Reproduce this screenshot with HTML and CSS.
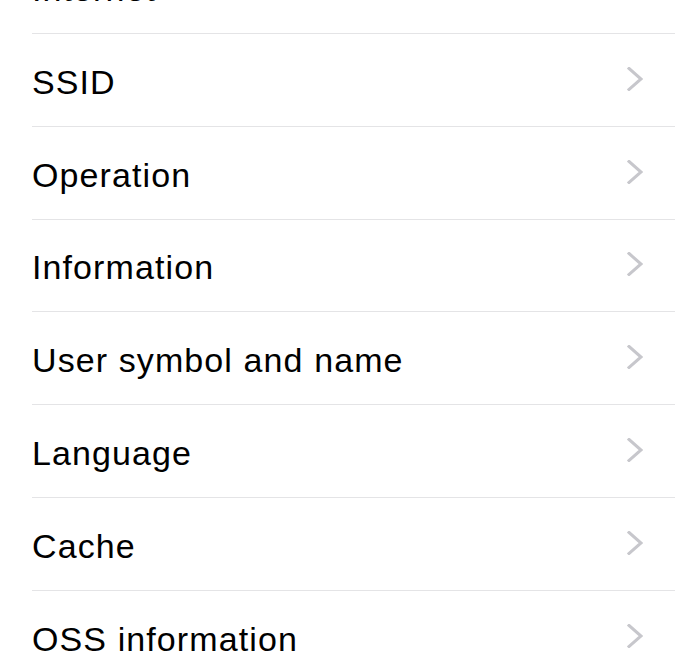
FILE: index.html
```html
<!DOCTYPE html>
<html>
<head>
<meta charset="utf-8">
<link rel="stylesheet" href="styles.css">
</head>
<body>
<ul class="list">
  <li class="row"><span class="label">Internet</span><svg class="chev" viewBox="0 0 16 24"><polyline points="2,1.5 14,12 2,22.5"/></svg></li>
  <li class="row"><span class="label">SSID</span><svg class="chev" viewBox="0 0 16 24"><polyline points="2,1.5 14,12 2,22.5"/></svg></li>
  <li class="row"><span class="label">Operation</span><svg class="chev" viewBox="0 0 16 24"><polyline points="2,1.5 14,12 2,22.5"/></svg></li>
  <li class="row"><span class="label">Information</span><svg class="chev" viewBox="0 0 16 24"><polyline points="2,1.5 14,12 2,22.5"/></svg></li>
  <li class="row"><span class="label">User symbol and name</span><svg class="chev" viewBox="0 0 16 24"><polyline points="2,1.5 14,12 2,22.5"/></svg></li>
  <li class="row"><span class="label">Language</span><svg class="chev" viewBox="0 0 16 24"><polyline points="2,1.5 14,12 2,22.5"/></svg></li>
  <li class="row"><span class="label">Cache</span><svg class="chev" viewBox="0 0 16 24"><polyline points="2,1.5 14,12 2,22.5"/></svg></li>
  <li class="row"><span class="label">OSS information</span><svg class="chev" viewBox="0 0 16 24"><polyline points="2,1.5 14,12 2,22.5"/></svg></li>
</ul>
</body>
</html>
```
FILE: styles.css
```css
html, body {
  margin: 0;
  padding: 0;
  background: #ffffff;
  overflow: hidden;
}
.list {
  list-style: none;
  margin: -58.8px 0 0 0;
  padding: 0 0 0 32px;
}
.row {
  height: 92.8px;
  box-sizing: border-box;
  display: flex;
  align-items: center;
  justify-content: space-between;
  padding-right: 32px;
  border-bottom: 1px solid #e4e4e6;
}
.label {
  font-family: "Liberation Sans", Arial, sans-serif;
  font-size: 34px;
  letter-spacing: 1.1px;
  color: #000000;
  padding-top: 5px;
}
.chev {
  width: 16px;
  height: 24px;
  margin-top: -2px;
}
.chev polyline {
  fill: none;
  stroke: #c7c7cc;
  stroke-width: 3;
  stroke-linecap: square;
  stroke-linejoin: miter;
}
```
